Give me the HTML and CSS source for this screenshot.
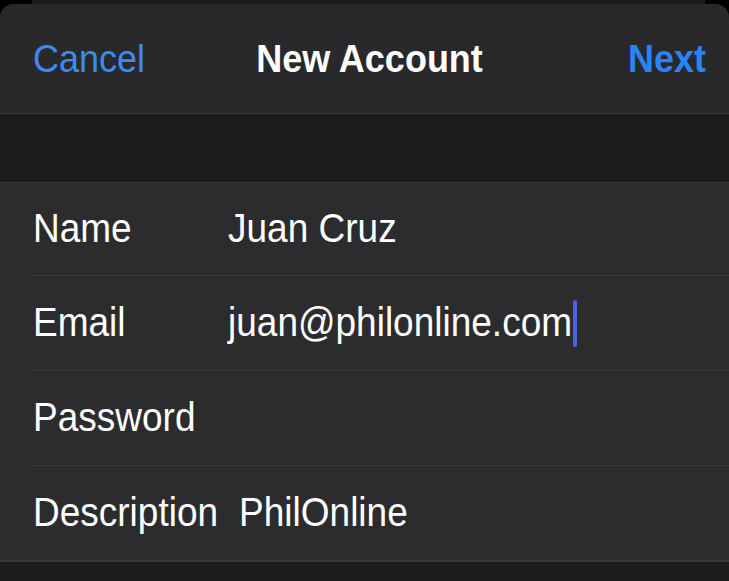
FILE: index.html
```html
<!DOCTYPE html>
<html lang="en">
<head>
  <meta charset="UTF-8">
  <meta name="viewport" content="width=device-width, initial-scale=1.0">
  <title>New Account</title>
  <link rel="stylesheet" href="styles.css">
</head>
<body>
  <div class="behind"></div>
  <div class="sheet">
    <header class="nav">
      <span class="nav-btn cancel"><span class="tall">Cancel</span></span>
      <span class="nav-title"><span class="tall">New Account</span></span>
      <span class="nav-btn next"><span class="tall">Next</span></span>
    </header>

    <div class="gap"></div>

    <div class="form">
      <div class="row">
        <span class="label"><span class="tall">Name</span></span>
        <span class="value"><span class="tall">Juan Cruz</span></span>
      </div>
      <div class="row">
        <span class="label"><span class="tall">Email</span></span>
        <span class="value"><span class="tall">juan@philonline.com</span><span class="caret"></span></span>
      </div>
      <div class="row">
        <span class="label"><span class="tall">Password</span></span>
        <span class="value"></span>
      </div>
      <div class="row">
        <span class="label"><span class="tall">Description</span></span>
        <span class="value"><span class="tall">PhilOnline</span></span>
      </div>
    </div>
  </div>
</body>
</html>
```

FILE: styles.css
```css
body {
  margin: 0;
  padding: 0;
  background-color: #000;
  font-family: "Liberation Sans", Arial, sans-serif;
  color: #fff;
  height: 581px;
  overflow: hidden;
}
.behind {
  height: 4px;
  margin: 0 24px 0 32px;
  background: #1c1c1e;
}
.sheet {
  background: #1c1c1e;
  border-radius: 14px 14px 0 0;
  overflow: hidden;
  height: 577px;
}
.tall {
  display: inline-block;
  transform: scaleY(1.1);
}
.nav {
  display: grid;
  grid-template-columns: 1fr auto 1fr;
  align-items: center;
  height: 109px;
  padding: 0 23px 0 33px;
  background: #29292b;
  border-bottom: 1px solid #38383b;
  font-size: 36px;
}
.nav-btn {
  color: #3d8bf0;
}
.nav-title {
  font-weight: bold;
}
.next {
  justify-self: end;
  font-weight: bold;
  color: #2884f8;
}
.gap {
  height: 68px;
  background: #1c1c1e;
}
.form {
  background: #2c2c2e;
  border-top: 1px solid #38383b;
  border-bottom: 2px solid #3a3a3d;
  padding-left: 32px;
}
.row {
  display: flex;
  align-items: center;
  height: 94px;
  border-bottom: 1px solid #3a3a3d;
  font-size: 37px;
}
.row:first-child {
  height: 92px;
}
.row:last-child {
  border-bottom: none;
}
.label {
  min-width: 174px;
  margin-right: 21px;
  padding-left: 1px;
}
.value {
  display: flex;
  align-items: center;
}
.caret {
  width: 4px;
  height: 47px;
  margin-left: 1px;
  border-radius: 2px;
  background: #4a62e6;
}
```
